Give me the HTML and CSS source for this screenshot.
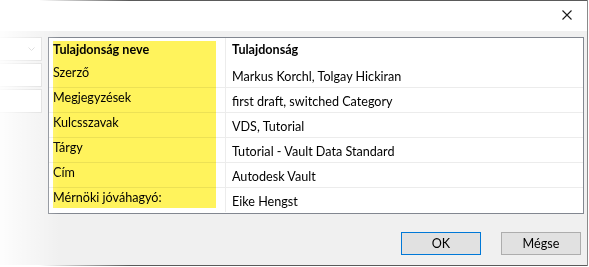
FILE: index.html
```html
<!DOCTYPE html>
<html lang="hu">
<head>
    <meta charset="UTF-8">
    <title>Tulajdonságok</title>
    <link rel="stylesheet" href="styles.css">
</head>
<body>
    <div class="window">
        <div class="titlebar">
            <button class="close" type="button" aria-label="Bezárás">
                <svg width="10" height="10" viewBox="0 0 10 10">
                    <path d="M0.5 0.5 L9.5 9.5 M9.5 0.5 L0.5 9.5" stroke="#1a1a1a" stroke-width="1.1" fill="none"/>
                </svg>
            </button>
        </div>

        <div class="content">
            <div class="main">
                <div class="side">
                    <div class="field combo">
                        <svg width="7" height="4" viewBox="0 0 7 4">
                            <path d="M0.5 0.5 L3.5 3.5 L6.5 0.5" stroke="#c8c8c8" fill="none"/>
                        </svg>
                    </div>
                    <div class="field"></div>
                    <div class="field"></div>
                </div>

                <div class="grid">
                    <div class="row head">
                        <div class="cell name">Tulajdonság neve</div>
                        <div class="cell value">Tulajdonság</div>
                    </div>
                    <div class="row">
                        <div class="cell name">Szerző</div>
                        <div class="cell value">Markus Korchl, Tolgay Hickiran</div>
                    </div>
                    <div class="row">
                        <div class="cell name">Megjegyzések</div>
                        <div class="cell value">first draft, switched Category</div>
                    </div>
                    <div class="row">
                        <div class="cell name">Kulcsszavak</div>
                        <div class="cell value">VDS, Tutorial</div>
                    </div>
                    <div class="row">
                        <div class="cell name">Tárgy</div>
                        <div class="cell value">Tutorial - Vault Data Standard</div>
                    </div>
                    <div class="row">
                        <div class="cell name">Cím</div>
                        <div class="cell value">Autodesk Vault</div>
                    </div>
                    <div class="row last">
                        <div class="cell name">Mérnöki jóváhagyó:</div>
                        <div class="cell value">Eike Hengst</div>
                    </div>

                    <!-- highlighter mark over the first column -->
                    <div class="highlight"></div>
                </div>
            </div>

            <div class="footer">
                <button type="button" class="btn default">OK</button>
                <button type="button" class="btn">Mégse</button>
            </div>
        </div>

        <div class="fade"></div>
    </div>
</body>
</html>
```

FILE: styles.css
```css
* {
    margin: 0;
    padding: 0;
    box-sizing: border-box;
}

body {
    width: 589px;
    height: 267px;
    background: #fff;
    font-family: 'Lato', 'Noto Sans', sans-serif;
    font-size: 12.6px;
    color: #000;
    overflow: hidden;
}

.window {
    position: relative;
    width: 587px;
    height: 266px;
    display: flex;
    flex-direction: column;
    border-top: 1px solid transparent;
    border-bottom: 1px solid transparent;
    border-right-width: 0;
    border-image: linear-gradient(to right, rgba(90, 90, 90, 0) 40px, #5a5a5a 130px) 1;
    box-shadow: 1px 0 0 #8a8a8a;
}

/* Title bar */
.titlebar {
    height: 30px;
    background: #fff;
    display: flex;
    justify-content: flex-end;
    align-items: flex-start;
}

.close {
    width: 34px;
    height: 30px;
    border: none;
    background: none;
    display: flex;
    justify-content: center;
    padding-top: 9px;
    margin-right: 3px;
}

/* Dialog body */
.content {
    flex: 1;
    background: #f0f0f0;
    display: flex;
    flex-direction: column;
    padding: 6px 3px 0 0;
}

.main {
    display: flex;
}

.side {
    width: 42px;
    display: flex;
    flex-direction: column;
    gap: 2px;
}

.field {
    height: 24px;
    background: #fff;
    border: 1px solid #d9d9d9;
    border-left: none;
}

.combo {
    display: flex;
    justify-content: flex-end;
    align-items: center;
    padding-right: 6px;
}

/* Property grid */
.grid {
    position: relative;
    margin-left: 6px;
    width: 536px;
    height: 177px;
    background: #fff;
    border: 1px solid #828790;
}

.row {
    display: flex;
    height: 25px;
    border-bottom: 1px solid #ececec;
}

.row.head,
.row.last {
    border-bottom: none;
}

.row.last {
    height: 24px;
}

.cell {
    white-space: nowrap;
    line-height: 16px;
}

.name {
    width: 177px;
    padding: 2px 0 0 4px;
    border-right: 1px solid #ececec;
}

.value {
    padding: 6px 0 0 6px;
}

.head .cell {
    font-weight: bold;
    padding-top: 4px;
}

.highlight {
    position: absolute;
    left: 4px;
    top: 3px;
    width: 163px;
    height: 167px;
    background: #fff35c;
    mix-blend-mode: multiply;
    pointer-events: none;
}

/* Buttons */
.footer {
    display: flex;
    justify-content: flex-end;
    gap: 20px;
    padding: 18px 3px 0 0;
}

.btn {
    width: 80px;
    height: 23px;
    font-family: inherit;
    font-size: 12.6px;
    color: #000;
    background: #e1e1e1;
    border: 1px solid #adadad;
}

.btn.default {
    border-color: #0078d7;
}

/* white fade on the cropped left edge */
.fade {
    position: absolute;
    top: 0;
    left: 0;
    bottom: 0;
    width: 60px;
    background: linear-gradient(to right, rgba(255, 255, 255, 0.9), rgba(255, 255, 255, 0));
    pointer-events: none;
}
```
